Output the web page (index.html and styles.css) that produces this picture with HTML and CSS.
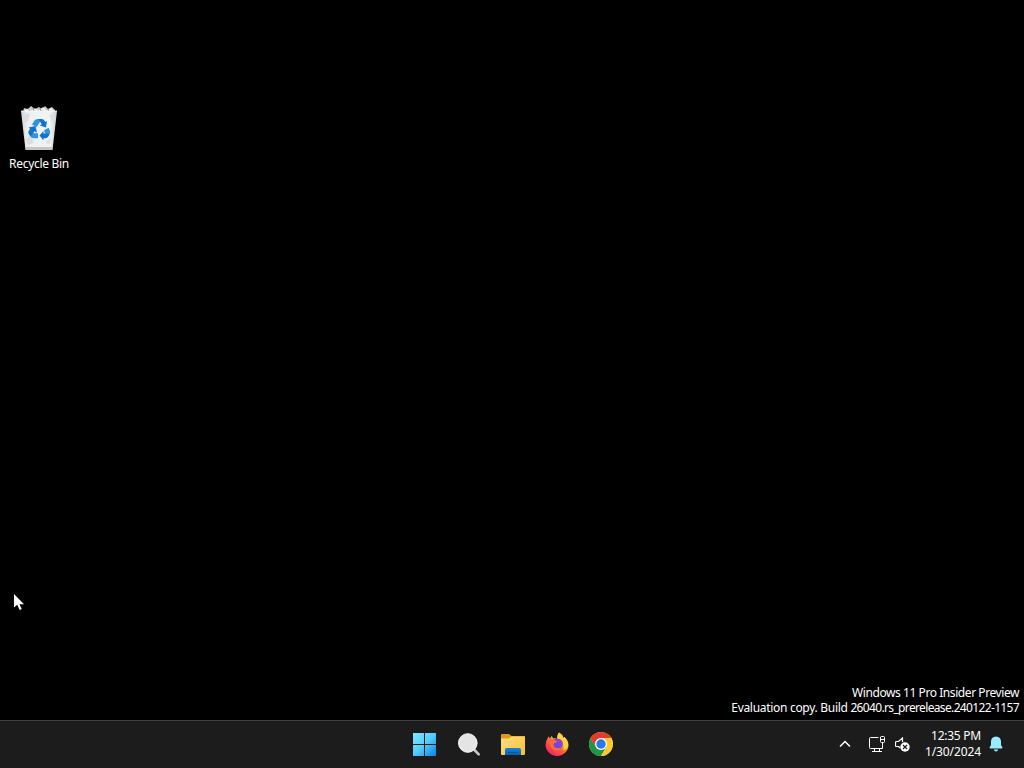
FILE: index.html
```html
<!DOCTYPE html>
<html lang="en">
<head>
  <meta charset="UTF-8" />
  <meta name="viewport" content="width=device-width, initial-scale=1.0"/>
  <title>Desktop</title>
  <link rel="stylesheet" href="styles.css">
</head>
<body>
  <main class="desktop">
    <div class="shortcut">
      <svg width="36" height="45" viewBox="0 0 36 45">
        <defs>
          <linearGradient id="bin" x1="0" x2="1" y1="0" y2="0">
            <stop offset="0" stop-color="#cfd1d3"/>
            <stop offset=".18" stop-color="#eeeff1"/>
            <stop offset=".8" stop-color="#f2f3f4"/>
            <stop offset="1" stop-color="#c9cbcd"/>
          </linearGradient>
        </defs>
        <path d="M2 6 3 2 7 3 10 0 14 3 18 1 21 3 24 0 27 3 31 1 34 4 34 8 3 8z" fill="#c9cbcc"/>
        <path d="M4 5 8 3 10 6 14 3 17 6 22 2 25 6 30 3 32 6" fill="none" stroke="#fff" stroke-width="1.3"/>
        <path d="M7 2 9 5M12 2 13 5M19 2 20 6M27 3 28 6" stroke="#77797b" stroke-width=".9"/>
        <path d="M0 5 36 5 31.500 44 4.500 44z" fill="url(#bin)"/>
        <path d="M3 9 9 7 7 15 4 17zM5 33 10 29 13 37 7 39zM24 37 30 31 29 38zM28 9 33 8 31 16z" fill="#d4d6d8" opacity=".7"/>
        <path d="M5 41H31L30.800 44H5z" fill="#c6c3c0"/>
        <path d="M0 5H36" stroke="#fafafa" stroke-width=".8"/>
        <g>
          <path d="M11 18.500 13.500 14.500Q14.500 13 16.500 13H18.500L19.500 15 15.700 21z" fill="#2f93e8"/>
          <path d="M17.500 13H21Q22.500 13 23.500 14.700L24.300 16 26 15 25 21.500 18.800 19.500 20.700 18.300z" fill="#0f74d0"/>
          <path d="M23 24.300 27.600 21.800 29 25Q29.500 27 28.500 28.500L24.800 29z" fill="#2f93e8"/>
          <path d="M28.700 28.300 27 31Q26 32.300 24 32.300H22.500V34.500L18.500 29.500 22.500 25V27.500H24.500z" fill="#0f74d0"/>
          <path d="M17 27.300V32.300H12.500Q10.500 32.300 9.500 30.500L8 27.500 11.500 25.500 12.500 27.300z" fill="#2f93e8"/>
          <path d="M9.500 30.500 7.500 27.500Q7 26 8 24.500L9 22.800 7.500 21.500 14.500 20 16 26.500 13.500 25.200 11.500 28z" fill="#0f74d0"/>
        </g>
      </svg>
      <span class="shortcut-name">Recycle Bin</span>
    </div>

    <svg class="cursor" width="12" height="18" viewBox="0 0 12 18">
      <path d="M0 0V13.500L3.200 10.700 5.700 16 7.700 15 5.500 10.200H10z" fill="#fff"/>
    </svg>

    <div class="watermark">
      <p class="edition">Windows 11 Pro Insider Preview</p>
      <p class="build">Evaluation copy. Build <span class="build-number">26040.rs_prerelease.240122-1157</span></p>
    </div>
  </main>

  <footer class="taskbar">
    <div class="apps">
      <button class="app" aria-label="Start">
        <svg width="24" height="24" viewBox="0 0 24 24">
          <defs>
            <linearGradient id="start" gradientUnits="userSpaceOnUse" x1="0" y1="1" x2="23" y2="24">
              <stop offset="0" stop-color="#80eaff"/>
              <stop offset=".5" stop-color="#50cdfb"/>
              <stop offset="1" stop-color="#0882e5"/>
            </linearGradient>
          </defs>
          <path d="M0 1H11V12H0zM12 1H23V12H12zM0 13H11V24H0zM12 13H23V24H12z" fill="url(#start)"/>
        </svg>
      </button>
      <button class="app" aria-label="Search">
        <svg width="24" height="24" viewBox="0 0 24 24">
          <path d="M17.500 18 21.700 22.300" stroke="#c7c7c7" stroke-width="2.600" stroke-linecap="round"/>
          <circle cx="10.800" cy="11" r="9.300" fill="#e9e9e9" stroke="#f6f6f6" stroke-width="1"/>
          <circle cx="10.800" cy="11" r="8" fill="#e4e4e4"/>
        </svg>
      </button>
      <button class="app" aria-label="File Explorer">
        <svg width="26" height="24" viewBox="0 0 26 24">
          <defs>
            <linearGradient id="folder" x1="0" x2="1" y1="0" y2="1">
              <stop offset="0" stop-color="#ffe083"/>
              <stop offset="1" stop-color="#f8bd33"/>
            </linearGradient>
            <linearGradient id="folder-blue" x1="0" x2="0" y1="0" y2="1">
              <stop offset="0" stop-color="#1683d8"/>
              <stop offset="1" stop-color="#0761b4"/>
            </linearGradient>
          </defs>
          <path d="M1 3Q1 2 2 2H9L11.500 4H24Q25 4 25 5V9H1z" fill="#d99b16"/>
          <path d="M1 6.500H9L11.500 4.500H25V22Q25 23 24 23H2Q1 23 1 22z" fill="url(#folder)"/>
          <path d="M5 23V18Q5 16 7 16H19Q21 16 21 18V23z" fill="url(#folder-blue)"/>
          <path d="M8 20.500H18" stroke="#0c5292"/>
        </svg>
      </button>
      <button class="app" aria-label="Firefox">
        <svg width="24" height="24" viewBox="0 0 24 24">
          <defs>
            <linearGradient id="fox" x1=".8" x2=".2" y1=".1" y2=".95">
              <stop offset="0" stop-color="#fff044"/>
              <stop offset=".3" stop-color="#ffb72b"/>
              <stop offset=".6" stop-color="#ff5a36"/>
              <stop offset="1" stop-color="#ee2069"/>
            </linearGradient>
            <linearGradient id="globe" x1="0" x2="1" y1="1" y2="0">
              <stop offset="0" stop-color="#5a4de0"/>
              <stop offset="1" stop-color="#a03bd0"/>
            </linearGradient>
          </defs>
          <path d="M14 .5Q17 2 18.500 6L19.500 5Q23.500 9 23.500 13A11.400 11 0 0 1 .6 13Q.5 9 2.800 6L3.500 4.500 5 6.500 6.500 4 8.500 6.500Q10.500 6 12 7 12 3 14 .5z" fill="url(#fox)"/>
          <path d="M14 .5Q17 2 18.500 6L19.500 5Q24 10 22.500 15 21 18 18.500 18 19.500 13 16 9L12 7Q12 3 14 .5z" fill="#ffd13a"/>
          <circle cx="12.300" cy="12" r="5.600" fill="url(#globe)"/>
          <path d="M3 8Q5 6 8.500 7.500L10.500 8.500 12.500 9.500Q11 11 9 11 7.500 13 9.500 15.200 12.500 17 16 15.500 14 20 9 18 5 16 5 11z" fill="#ff6a38"/>
        </svg>
      </button>
      <button class="app" aria-label="Chrome">
        <svg width="24" height="24" viewBox="0 0 24 24">
          <circle cx="12" cy="12" r="12" fill="#fcc934"/>
          <path d="M12 12V6H22.390A12 12 0 0 0 1.610 6L6.800 15z" fill="#e33b2e"/>
          <path d="M1.610 6A12 12 0 0 0 12 24L17.200 15 12 12 6.800 15z" fill="#1e9648"/>
          <path d="M22.390 6A12 12 0 0 1 12 24L17.200 15Q19 10 12 6z" fill="#fcc934"/>
          <circle cx="12" cy="12" r="6" fill="#fff"/>
          <circle cx="12" cy="12" r="4.700" fill="#2879e8"/>
        </svg>
      </button>
    </div>

    <div class="tray">
      <svg class="chevron" width="12" height="8" viewBox="0 0 12 8">
        <path d="M1 6.500 6 1.500 11 6.500" fill="none" stroke="#fff" stroke-width="1.500"/>
      </svg>
      <svg class="network" width="16" height="17" viewBox="0 0 16 17">
        <path d="M9.500 1.500H1.500Q.5 1.500 .5 2.500V11.500Q.5 12.500 1.500 12.500H13.500V6.500M5.500 12.500V15.500M10.500 12.500V15.500M3 15.500H13" fill="none" stroke="#fff"/>
        <path d="M11.500 1V5.500Q11.500 6.500 12.500 6.500H14.500Q15.500 6.500 15.500 5.500V1.500Q15.500 .5 14.500 .5H12.500Q11.500 .5 11.500 1.500M12 3.500H15" fill="none" stroke="#fff"/>
      </svg>
      <svg class="volume" width="15" height="15" viewBox="0 0 15 15">
        <path d="M4.500 9.500H1.500Q.5 9.500 .5 8.500V5.500Q.5 4.500 1.500 4.500H3.500L7.500 1V5M3.500 9.500 5 11" fill="none" stroke="#fff" stroke-width="1.200"/>
        <circle cx="10" cy="10" r="4.700" fill="#fff"/>
        <path d="M8 8 12 12M12 8 8 12" stroke="#1c1c1c" stroke-width="1.200"/>
      </svg>
      <div class="clock">
        <p class="time">12:35 PM</p>
        <p class="date">1/30/2024</p>
      </div>
      <svg class="bell" width="14" height="16" viewBox="0 0 14 16">
        <path d="M7 .5Q12 .8 12 5.500V9L13.500 11.500Q13.500 12.500 12.500 12.500H1.500Q.5 12.500 .5 11.500L2 9V5.500Q2 .8 7 .5zM4.800 13.500H9.200Q8.700 15.500 7 15.500T4.800 13.500z" fill="#99ebff"/>
      </svg>
    </div>
  </footer>
</body>
</html>
```
FILE: styles.css
```css
* {
  margin: 0;
  padding: 0;
  box-sizing: border-box;
}
body {
  display: flex;
  flex-direction: column;
  height: 100vh;
  overflow: hidden;
  background-color: #000;
  color: #fff;
  font-family: "Noto Sans", "Open Sans", sans-serif;
  font-size: 12px;
}
.desktop {
  position: relative;
  flex: 1;
  display: flex;
  flex-direction: column;
  justify-content: flex-end;
}
.shortcut {
  position: absolute;
  left: 0;
  top: 106px;
  width: 78px;
  display: flex;
  flex-direction: column;
  align-items: center;
  gap: 5px;
}
.shortcut-name {
  line-height: 16px;
  white-space: nowrap;
  letter-spacing: -0.3px;
}
.cursor {
  position: absolute;
  left: 14px;
  top: 594px;
}
.watermark {
  padding: 0 5px 5px 0;
  text-align: right;
  line-height: 15px;
}
.edition {
  letter-spacing: -0.43px;
}
.build {
  letter-spacing: -0.3px;
}
.build-number {
  letter-spacing: -0.65px;
}

/* TASKBAR */
.taskbar {
  display: grid;
  grid-template-columns: 1fr 220px 1fr;
  align-items: center;
  height: 48px;
  padding-bottom: 1px;
  background-color: #1c1c1c;
  border-top: 1px solid #404040;
}
.apps {
  grid-column: 2;
  display: flex;
  margin-left: 1px;
}
.app {
  flex: none;
  display: flex;
  justify-content: center;
  align-items: center;
  width: 44px;
  height: 44px;
  border: none;
  background: none;
}
.tray {
  display: flex;
  justify-content: flex-end;
  align-items: center;
  padding-right: 21px;
}
.network {
  margin-left: 18px;
}
.volume {
  margin-left: 10px;
}
.clock {
  width: 57px;
  margin-left: 14px;
  text-align: right;
  line-height: 16px;
  white-space: nowrap;
}
.time {
  letter-spacing: -0.25px;
}
.date {
  letter-spacing: -0.1px;
}
.bell {
  margin-left: 8px;
}
```
